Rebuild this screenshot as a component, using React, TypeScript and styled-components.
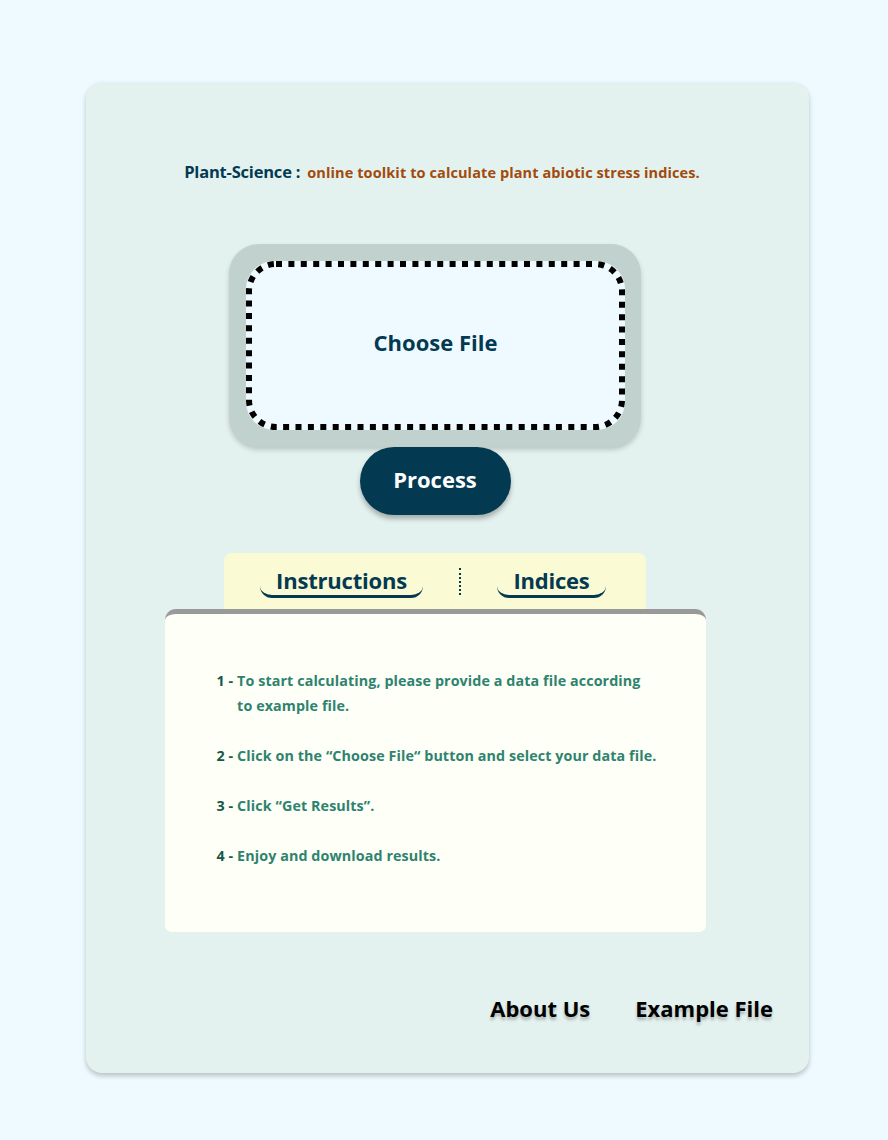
import React, { useState } from 'react';
import styled, { createGlobalStyle } from 'styled-components';

const GlobalStyle = createGlobalStyle`
  body {
    margin: 0;
    background: #eefaff;
    font-family: "Open Sans", "Noto Sans", sans-serif;
  }
`;

const Page = styled.div`
  padding: 82px 0 67px 86px;
`;

const Card = styled.div`
  width: 723px;
  height: 991px;
  box-sizing: border-box;
  background: #e4f2ef;
  border-radius: 16px;
  box-shadow: 0 3px 5px rgba(0, 0, 0, 0.22);
  display: flex;
  flex-direction: column;
  padding-top: 78px;
`;

const Main = styled.div`
  display: flex;
  flex-direction: column;
  align-items: center;
  padding-right: 25px;
`;

const Title = styled.div`
  display: flex;
  align-items: baseline;
  gap: 7px;
  height: 24px;
  margin-left: 14px;
`;

const Brand = styled.span`
  color: #033a52;
  font-size: 16.5px;
  font-weight: 700;
  letter-spacing: -0.2px;
`;

const Tagline = styled.span`
  color: #a24a0c;
  font-size: 14.5px;
  font-weight: 700;
  letter-spacing: 0.1px;
`;

const Upload = styled.label`
  margin-top: 60px;
  width: 412px;
  height: 203px;
  box-sizing: border-box;
  padding: 17px 16px 17px 17px;
  background: #c1d1ce;
  border-radius: 30px;
  box-shadow: 0 3px 5px rgba(0, 0, 0, 0.18);
  cursor: pointer;
`;

const Drop = styled.div`
  position: relative;
  height: 100%;
  box-sizing: border-box;
  padding-bottom: 7px;
  border-radius: 28px;
  background: #eefaff;
  display: flex;
  align-items: center;
  justify-content: center;
  color: #033a52;
  font-size: 22px;
  font-weight: 700;
`;

const DotFrame = styled.svg`
  position: absolute;
  inset: 0;
  width: 100%;
  height: 100%;
  overflow: visible;
`;

const ProcessButton = styled.button`
  width: 151px;
  height: 68px;
  padding: 0 0 4px;
  border: none;
  border-radius: 34px;
  background: #033a52;
  color: #fff;
  font-family: inherit;
  font-size: 22px;
  font-weight: 700;
  box-shadow: 0 4px 5px rgba(0, 0, 0, 0.28);
  cursor: pointer;
`;

const Tabs = styled.div`
  margin-top: 38px;
  width: 422px;
  height: 56px;
  box-sizing: border-box;
  background: #fafad4;
  border-radius: 8px 8px 0 0;
  display: flex;
  align-items: center;
  justify-content: center;
  gap: 36px;
  padding-right: 4px;
`;

const Tab = styled.button<{ $width: number }>`
  width: ${(p) => p.$width}px;
  height: 32px;
  margin-top: 2px;
  padding: 0 0 1px;
  border: none;
  border-bottom: 3px solid #033a52;
  border-radius: 0 0 12px 12px;
  background: transparent;
  color: #033a52;
  font-family: inherit;
  font-size: 22px;
  line-height: 24px;
  font-weight: 700;
  letter-spacing: -0.2px;
  cursor: pointer;
`;

const Divider = styled.div`
  width: 0;
  height: 27px;
  border-left: 2px dotted #033a52;
`;

const Panel = styled.div`
  width: 541px;
  height: 323px;
  box-sizing: border-box;
  background: #fefff6;
  border-top: 5px solid #999999;
  border-radius: 11px 11px 7px 7px;
  padding: 54px 20px 0 52px;
`;

const Steps = styled.ol`
  list-style: none;
  margin: 0;
  padding: 0;
  display: flex;
  flex-direction: column;
  gap: 25px;
`;

const Step = styled.li`
  display: flex;
  color: #2e8370;
  font-size: 14.3px;
  font-weight: 700;
  line-height: 25px;
  letter-spacing: 0.1px;
  white-space: pre-line;
`;

const Num = styled.span`
  color: #1a5748;
  white-space: pre;
`;

const Footer = styled.div`
  margin-top: auto;
  margin-bottom: 50px;
  display: flex;
  justify-content: flex-end;
  gap: 45px;
  padding-right: 36px;
`;

const FooterLink = styled.a`
  color: #000;
  font-size: 22px;
  font-weight: 700;
  text-decoration: none;
  text-shadow: 0 3px 3px rgba(0, 0, 0, 0.25);
  cursor: pointer;
`;

const steps = [
  'To start calculating, please provide a data file according\nto example file.',
  'Click on the \u201cChoose File\u201c button and select your data file.',
  'Click \u201cGet Results\u201d.',
  'Enjoy and download results.',
];

const App = () => {
  const [tab, setTab] = useState('instructions');

  return (
    <Page>
      <GlobalStyle />
      <Card>
        <Main>
          <Title>
            <Brand>Plant-Science :</Brand>
            <Tagline>online toolkit to calculate plant abiotic stress indices.</Tagline>
          </Title>

          <Upload>
            <Drop>
              <DotFrame>
                <rect
                  x="3"
                  y="3"
                  width="373"
                  height="163"
                  rx="27"
                  fill="none"
                  stroke="#000"
                  strokeWidth="6"
                  strokeDasharray="6 6.4"
                />
              </DotFrame>
              Choose File
            </Drop>
          </Upload>
          <ProcessButton>Process</ProcessButton>

          <Tabs>
            <Tab $width={163} onClick={() => setTab('instructions')}>Instructions</Tab>
            <Divider />
            <Tab $width={109} onClick={() => setTab('indices')}>Indices</Tab>
          </Tabs>
          <Panel>
            {tab === 'instructions' && (
              <Steps>
                {steps.map((s, i) => (
                  <Step key={i}>
                    <Num>{i + 1} - </Num>
                    <span>{s}</span>
                  </Step>
                ))}
              </Steps>
            )}
          </Panel>
        </Main>

        <Footer>
          <FooterLink>About Us</FooterLink>
          <FooterLink>Example File</FooterLink>
        </Footer>
      </Card>
    </Page>
  );
};

export default App;
